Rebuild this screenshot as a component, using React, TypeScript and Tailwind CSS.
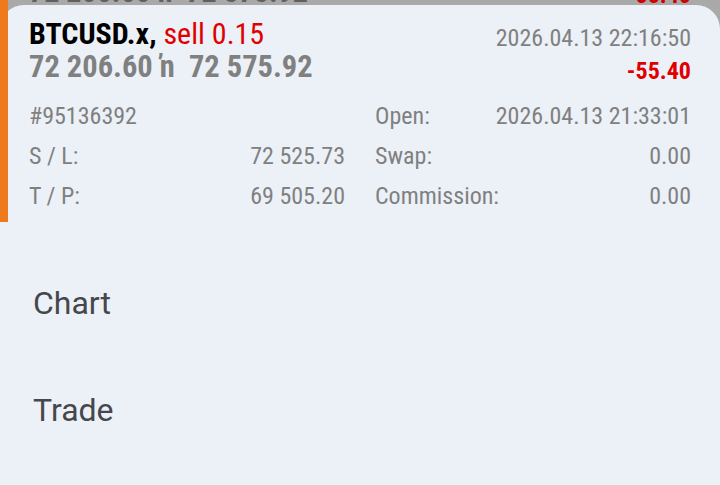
const cond = "font-['Roboto_Condensed','Roboto','Liberation_Sans',sans-serif]";

const details: [string, string, string, string][] = [
  ['#95136392', '', 'Open:', '2026.04.13 21:33:01'],
  ['S / L:', '72 525.73', 'Swap:', '0.00'],
  ['T / P:', '69 505.20', 'Commission:', '0.00'],
];

function MenuItem({ label }: { label: string }) {
  return (
    <div className="flex h-[107px] items-center px-[33px] font-['Roboto','Liberation_Sans',sans-serif] text-[32px] text-[#46474c]">
      {label}
    </div>
  );
}

export default function App() {
  return (
    <div className={`relative h-[485px] w-[720px] overflow-hidden bg-[#a9a9a9] ${cond}`}>
      {/* row underneath the sheet, only its lower edge shows */}
      <div className="flex h-[5px] items-end justify-between overflow-hidden px-[29px] font-bold leading-none">
        <span className="-mb-[2px] text-[30px] text-[#606060]">72 206.60 ŉ&nbsp;&nbsp;72 575.92</span>
        <span className="-mb-[2px] text-[24px] text-[#d00000]">-55.40</span>
      </div>

      <div className="absolute left-0 top-0 z-10 h-[222px] w-2 bg-[#ef7a1d]" />

      <div className="h-[480px] rounded-t-[24px] bg-[#ecf1f8]">
        <div className="h-[217px] px-[29px] pt-[13px]">
          <div className="flex justify-between">
            <div>
              <div className="text-[30px] leading-[32px] font-bold text-black">
                BTCUSD.x, <span className="font-normal text-[#e00000]">sell 0.15</span>
              </div>
              <div className="text-[30.5px] leading-[34px] font-bold text-[#808080]">
                72 206.60 ŉ&nbsp;&nbsp;72 575.92
              </div>
            </div>
            <div className="flex flex-col items-end pt-[4px]">
              <div className="text-[24px] leading-[32px] text-[#808080]">2026.04.13 22:16:50</div>
              <div className="text-[24px] leading-[34px] font-bold text-[#e00000]">-55.40</div>
            </div>
          </div>

          <div className="mt-[8px] grid grid-cols-2 gap-x-[30px] text-[24px] leading-[40px] text-[#808080]">
            {details.map(([l1, v1, l2, v2]) => (
              <div key={l1} className="contents">
                <div className="flex justify-between">
                  <span>{l1}</span>
                  <span>{v1}</span>
                </div>
                <div className="flex justify-between">
                  <span>{l2}</span>
                  <span>{v2}</span>
                </div>
              </div>
            ))}
          </div>
        </div>

        <div className="pt-[27px]">
          <MenuItem label="Chart" />
          <MenuItem label="Trade" />
        </div>
      </div>
    </div>
  );
}
